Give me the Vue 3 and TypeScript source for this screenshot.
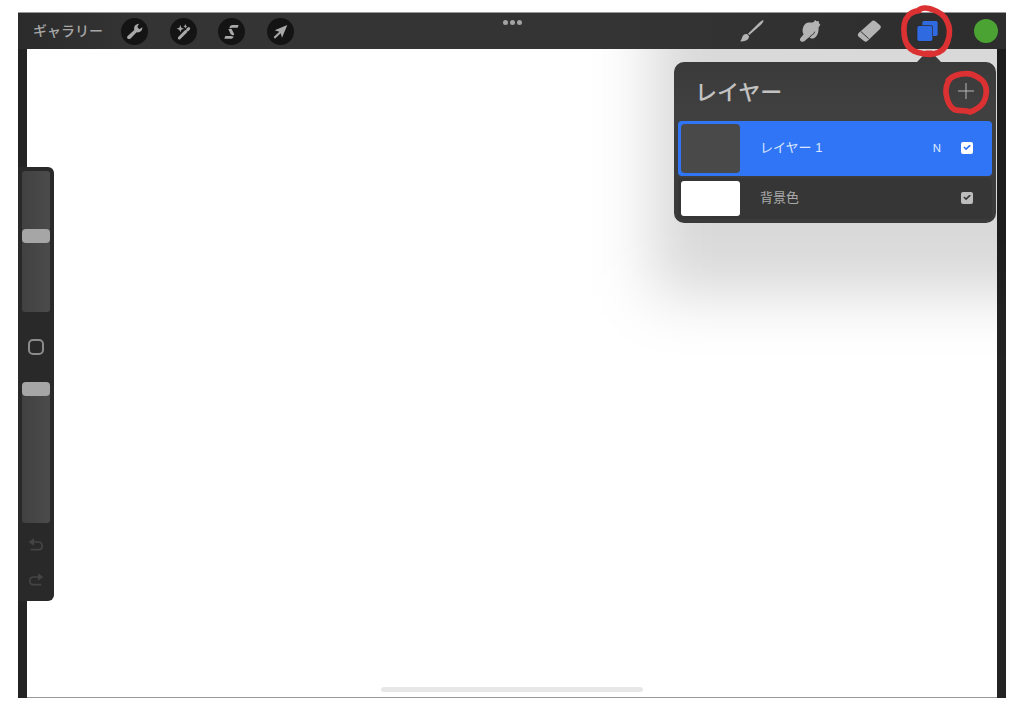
<script setup lang="ts">
import { ref } from 'vue'

interface Layer {
  id: string
  name: string
  blend: string
  visible: boolean
  selected: boolean
}

const brushSize = ref(54)
const brushOpacity = ref(100)
const layers = ref<Layer[]>([
  { id: 'layer-1', name: 'レイヤー 1', blend: 'N', visible: true, selected: true },
  { id: 'background', name: '背景色', blend: '', visible: true, selected: false },
])
</script>

<template>
  <div class="page">
    <header class="topbar">
      <div class="left">
        <a class="gallery" href="#">ギャラリー</a>
        <div class="actions">
          <button class="round" type="button" aria-label="アクション">
            <svg viewBox="0 0 81 81">
              <path d="M20 54 L40 36 C37 26 43 18 54 17 L49 27 L55 34 L64 28 C65 38 56 45 47 43 L28 62 C22 66 15 60 20 54Z" />
            </svg>
          </button>
          <button class="round" type="button" aria-label="調整">
            <svg viewBox="0 0 81 81">
              <path d="M28 60 L47 41 M53 35 L56 32" class="wand" />
              <path d="M31 21 L34 29 L42 32 L34 35 L31 43 L28 35 L20 32 L28 29Z" />
              <path d="M46 18 L48 23 L52 25 L48 27 L46 32 L44 27 L40 25 L44 23Z" />
            </svg>
          </button>
          <button class="round" type="button" aria-label="選択">
            <svg viewBox="0 0 81 81">
              <path d="M34 30 C35 24 39 21 43 21 L62 21 L59 29 L42 29 L38 31Z" />
              <path d="M31 33 L41 33 L48 47 C49 50 48 52 44 52 L38 49Z" />
              <path d="M22 54 L39 54 L47 56 C45 60 42 62 38 62 L19 62Z" />
            </svg>
          </button>
          <button class="round" type="button" aria-label="変形">
            <svg viewBox="0 0 81 81">
              <path d="M61 21 L23 37 L37 41 L20 57 L24 62 L41 46 L45 59Z" />
            </svg>
          </button>
        </div>
      </div>

      <button class="more" type="button" aria-label="マルチタスク">
        <i></i><i></i><i></i>
      </button>

      <div class="tools">
        <button class="tool" type="button" aria-label="ペイント">
          <svg viewBox="0 0 72 72">
            <path d="M73 4 C75 7 70 13 65 18 L31 48 L27 44 L59 13 C64 8 70 3 73 4Z" />
            <path d="M25 46 L30 51 C31 62 18 69 3 67 C11 62 7 49 18 46 C21 45 23 45 25 46Z" />
          </svg>
        </button>
        <button class="tool" type="button" aria-label="ぼかし">
          <svg viewBox="0 0 72 72">
            <path d="M7 58 L17 46 C10 37 15 17 26 12 C34 9 41 13 48 8 L51 3 L56 7 L62 6 L63 13 L67 17 L62 25 C62 42 58 52 49 57 C43 60 37 59 35 55 L31 56 L19 67 C12 71 3 66 7 58Z" />
            <path class="crease" d="M34 56 L41 48 C46 46 49 43 50 38" />
          </svg>
        </button>
        <button class="tool" type="button" aria-label="消去">
          <svg viewBox="0 0 72 72">
            <path d="M43 8 C47 4 51 4 55 7 L69 19 C73 23 72 26 69 30 L32 65 C28 69 25 69 21 66 L5 53 C1 49 2 46 5 42Z" />
            <path class="crease" d="M11 37 L35 59" />
          </svg>
        </button>
        <button class="tool layers-tool" type="button" aria-label="レイヤー">
          <svg viewBox="0 0 72 72">
            <rect x="22" y="6" width="46" height="45" rx="5" />
            <rect class="gap" x="5" y="19" width="49" height="49" rx="7" />
            <rect x="7" y="21" width="45" height="45" rx="5" />
          </svg>
          <svg class="ring" viewBox="0 0 156 156" aria-hidden="true">
            <path d="M49 18 C62 6 82 8 95 14 C112 20 129 29 137 47 C147 65 147 90 140 110 C134 130 117 143 97 147 C77 152 55 143 40 139 C25 131 13 115 10 93 C7 70 9 45 22 32 C30 23 40 19 54 17" />
            <path d="M76 145 L92 145" />
          </svg>
        </button>
        <button class="tool color" type="button" aria-label="カラー"></button>
      </div>
    </header>

    <main class="workspace">
      <div class="canvas"><div class="home"></div></div>

      <aside class="sidebar">
        <input v-model.number="brushSize" type="range" min="0" max="100" aria-label="ブラシサイズ" />
        <button class="modify" type="button" aria-label="修正"></button>
        <input v-model.number="brushOpacity" type="range" min="0" max="100" aria-label="不透明度" />
        <button class="history" type="button" aria-label="取り消す">
          <svg viewBox="0 0 48 42">
            <path class="line" d="M12 12 H32 C46 12 46 35 32 35 H8" />
            <path d="M2 12 L18 1 V23Z" />
          </svg>
        </button>
        <button class="history" type="button" aria-label="やり直す">
          <svg viewBox="0 0 48 42">
            <path class="line" d="M36 12 H16 C2 12 2 35 16 35 H40" />
            <path d="M46 12 L30 1 V23Z" />
          </svg>
        </button>
      </aside>

      <div class="anchor">
        <section class="popover">
          <div class="head">
            <h1>レイヤー</h1>
            <button class="add" type="button" aria-label="レイヤーを追加">
              <svg viewBox="0 0 72 72"><path d="M12 36 H60 M36 12 V60" /></svg>
              <svg class="ring" viewBox="0 0 156 156" aria-hidden="true">
                <path d="M25 46 C37 31 60 26 82 26 C100 26 125 41 132 53 C143 70 140 95 130 113 C120 127 105 136 90 141 C75 134 55 140 42 133 C29 125 21 105 18 85 C17 67 20 55 29 43" />
              </svg>
            </button>
          </div>
          <ul>
            <li v-for="layer in layers" :key="layer.id" :class="{ selected: layer.selected }">
              <span class="thumb"></span>
              <label :for="layer.id">{{ layer.name }}</label>
              <span class="blend">{{ layer.blend }}</span>
              <input :id="layer.id" v-model="layer.visible" type="checkbox" />
            </li>
          </ul>
        </section>
      </div>
    </main>
  </div>
</template>

<style>
body {
  margin: 0;
  background: #fff;
}
</style>

<style scoped>
.page {
  box-sizing: border-box;
  min-height: 100vh;
  padding: 12px 18px 13px;
  display: flex;
  flex-direction: column;
  font-family: "Liberation Sans", "Noto Sans CJK JP", sans-serif;
}
button {
  display: block;
  margin: 0;
  padding: 0;
  border: 0;
  background: none;
  cursor: pointer;
}
svg {
  display: block;
  overflow: visible;
}
.topbar {
  position: relative;
  z-index: 2;
  box-sizing: border-box;
  height: 37px;
  border-top: 1px solid #989898;
  background: linear-gradient(90deg, #2b2b2b, #343434 12%, #343434 60%, #2d2d2d);
  display: grid;
  grid-template-columns: 1fr auto 1fr;
  align-items: center;
}
.left {
  display: flex;
  align-items: center;
  gap: 18px;
  padding-left: 15px;
}
.gallery {
  padding-bottom: 2px;
  color: #a6a6a6;
  font-family: "Noto Sans CJK JP", sans-serif;
  font-size: 14px;
  line-height: 20px;
  font-weight: 500;
  text-decoration: none;
  white-space: nowrap;
}
.actions {
  width: 173px;
  display: flex;
  justify-content: space-between;
}
.round {
  width: 27px;
  height: 27px;
  border-radius: 50%;
  background: #141414;
}
.round svg {
  width: 27px;
  height: 27px;
  fill: #a8a8a8;
}
.round .wand {
  fill: none;
  stroke: #a8a8a8;
  stroke-width: 9;
  stroke-linecap: round;
}
.more {
  align-self: start;
  height: 19px;
  display: flex;
  align-items: center;
  gap: 2px;
}
.more i {
  width: 5px;
  height: 5px;
  border-radius: 50%;
  background: #a3a3a3;
}
.tools {
  justify-self: end;
  width: 259px;
  margin-right: 8px;
  display: flex;
  justify-content: space-between;
}
.tool {
  position: relative;
  width: 24px;
  height: 24px;
}
.tool svg {
  width: 24px;
  height: 24px;
  fill: #b4b4b4;
}
.tool .crease {
  fill: none;
  stroke: #303030;
  stroke-width: 3;
}
.layers-tool svg {
  fill: #2f6ae0;
}
.layers-tool .gap {
  fill: #2c2c2c;
}
.color {
  border-radius: 50%;
  background: #4aa332;
}
.tool .ring,
.add .ring {
  position: absolute;
  left: -14px;
  top: -14px;
  width: 52px;
  height: 52px;
  fill: none;
  stroke: #dc3132;
  stroke-width: 17;
  stroke-linecap: round;
  pointer-events: none;
}
.workspace {
  position: relative;
  flex: 1;
  display: flex;
  padding: 0 9px;
  overflow: hidden;
  background: #232323;
}
.canvas {
  flex: 1;
  display: flex;
  align-items: flex-end;
  justify-content: center;
  border-bottom: 1px solid #989898;
  background: #fff;
}
.home {
  width: 27%;
  height: 5px;
  margin-bottom: 5px;
  border-radius: 3px;
  background: #e7e7e7;
}
.sidebar {
  position: absolute;
  left: 0;
  top: 118px;
  box-sizing: border-box;
  width: 36px;
  padding: 4px 4px 14px;
  border-radius: 0 6px 6px 0;
  background: #292929;
  display: flex;
  flex-direction: column;
  align-items: center;
}
.sidebar input {
  appearance: none;
  writing-mode: vertical-lr;
  direction: rtl;
  width: 28px;
  height: 141px;
  margin: 0;
  border-radius: 3px;
  background: linear-gradient(90deg, #414141, #4b4b4b);
}
.sidebar input::-webkit-slider-thumb {
  appearance: none;
  width: 28px;
  height: 14px;
  border: 0;
  border-radius: 4px;
  background: #a6a6a6;
}
.modify {
  box-sizing: border-box;
  width: 16px;
  height: 16px;
  margin: 27px 0;
  border: 2px solid #8b8b8b;
  border-radius: 5px;
}
.history {
  width: 16px;
  height: 14px;
  margin-top: 15px;
}
.history + .history {
  margin-top: 21px;
}
.history svg {
  width: 16px;
  height: 14px;
  fill: #444;
}
.history .line {
  fill: none;
  stroke: #444;
  stroke-width: 5;
}
.anchor {
  position: absolute;
  z-index: 1;
  right: 10px;
  top: 13px;
  width: 322px;
}
.anchor::before {
  content: "";
  position: absolute;
  z-index: -1;
  inset: -80px -80px -72px -22px;
  background: rgba(0, 0, 0, 0.15);
  filter: blur(30px);
}
.popover {
  position: relative;
  padding: 0 4px 4px;
  border-radius: 10px;
  background: linear-gradient(#3a3a3a, #404040 30%, #3a3a3a);
}
.popover::before {
  content: "";
  position: absolute;
  right: 55px;
  top: -9px;
  width: 24px;
  height: 9px;
  background: #3a3a3a;
  clip-path: polygon(0 100%, 36% 0, 64% 0, 100% 100%);
}
.head {
  box-sizing: border-box;
  height: 59px;
  padding: 0 14px 2px 17px;
  display: flex;
  align-items: center;
  justify-content: space-between;
}
h1 {
  margin: 0;
  padding-bottom: 2px;
  color: #c2c2c2;
  font-family: "Noto Sans CJK JP", sans-serif;
  font-size: 22px;
  line-height: 30px;
  font-weight: 500;
}
.add {
  position: relative;
  width: 24px;
  height: 24px;
}
.add svg {
  width: 24px;
  height: 24px;
  fill: none;
  stroke: #b8b8b8;
  stroke-width: 3;
}
ul {
  margin: 0;
  padding: 0;
  list-style: none;
  display: grid;
  gap: 2px;
}
li {
  box-sizing: border-box;
  height: 41px;
  padding: 3px 19px 3px 3px;
  border-radius: 4px;
  background: #363636;
  color: #a9a9a9;
  display: flex;
  align-items: center;
}
li.selected {
  height: 55px;
  background: #3175f7;
  color: #dce7fd;
}
.thumb {
  align-self: stretch;
  width: 59px;
  margin-right: 20px;
  border-radius: 3px;
  background: #fff;
}
.selected .thumb {
  border-radius: 4px;
  background: #494949;
}
label {
  flex: 1;
  padding-bottom: 2px;
  font-size: 13px;
  line-height: 20px;
}
.blend {
  margin-right: 20px;
  padding-bottom: 2px;
  font-family: Inter, sans-serif;
  font-size: 11px;
  line-height: 16px;
}
li input {
  appearance: none;
  display: grid;
  place-items: center;
  width: 12px;
  height: 12px;
  margin: 0 0 2px;
  border-radius: 2px;
  background: #bdbdbd;
  color: #3a3a3a;
}
.selected input {
  background: #fff;
  color: #3175f7;
}
li input:checked::before {
  content: "";
  width: 8px;
  height: 6px;
  background: currentColor;
  clip-path: polygon(4% 52%, 18% 32%, 38% 58%, 82% 2%, 98% 22%, 38% 96%);
}
</style>
